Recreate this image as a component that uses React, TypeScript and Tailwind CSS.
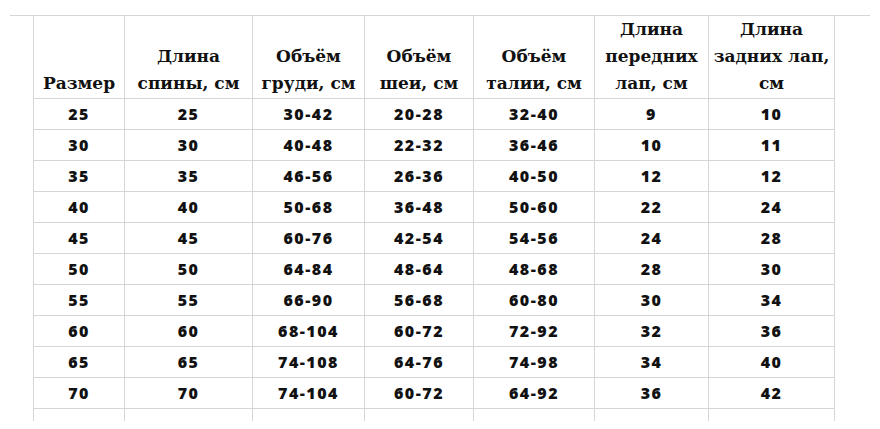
const headers = [
  ['Размер'],
  ['Длина', 'спины, см'],
  ['Объём', 'груди, см'],
  ['Объём', 'шеи, см'],
  ['Объём', 'талии, см'],
  ['Длина', 'передних', 'лап, см'],
  ['Длина', 'задних лап,', 'см'],
]

const widths = [91, 128, 112, 109, 121, 114, 126]

const rows = [
  ['25', '25', '30-42', '20-28', '32-40', '9', '10'],
  ['30', '30', '40-48', '22-32', '36-46', '10', '11'],
  ['35', '35', '46-56', '26-36', '40-50', '12', '12'],
  ['40', '40', '50-68', '36-48', '50-60', '22', '24'],
  ['45', '45', '60-76', '42-54', '54-56', '24', '28'],
  ['50', '50', '64-84', '48-64', '48-68', '28', '30'],
  ['55', '55', '66-90', '56-68', '60-80', '30', '34'],
  ['60', '60', '68-104', '60-72', '72-92', '32', '36'],
  ['65', '65', '74-108', '64-76', '74-98', '34', '40'],
  ['70', '70', '74-104', '60-72', '64-92', '36', '42'],
]

export default function App() {
  return (
    <div className="w-[880px] h-[429px] bg-white pt-[15px] overflow-hidden">
      <div className="ml-[10px] w-[860px] border-t border-[#d6d6d6]">
        <table className="ml-[23px] table-fixed border-collapse text-[#111]">
          <colgroup>
            {widths.map((w, i) => (
              <col key={i} style={{ width: w }} />
            ))}
          </colgroup>
          <thead>
            <tr className="h-[82px]">
              {headers.map((lines, i) => (
                <th
                  key={i}
                  className="border-x border-b border-[#d6d6d6] align-bottom p-0 pb-[1px] text-center font-bold text-[17px] leading-[27px] font-['DejaVu_Serif',serif]"
                >
                  {lines.map((l, j) => (
                    <div key={j} className="whitespace-nowrap">{l}</div>
                  ))}
                </th>
              ))}
            </tr>
          </thead>
          <tbody>
            {rows.map((r, i) => (
              <tr key={i} className="h-[31px]">
                {r.map((c, j) => (
                  <td
                    key={j}
                    className="border border-[#d6d6d6] p-0 text-center font-extrabold text-[16px] tracking-[1.5px] font-['Open_Sans',sans-serif]"
                  >
                    {c}
                  </td>
                ))}
              </tr>
            ))}
            <tr className="h-[12px]">
              {widths.map((_, j) => (
                <td key={j} className="border-x border-[#d6d6d6] p-0" />
              ))}
            </tr>
          </tbody>
        </table>
      </div>
    </div>
  )
}
